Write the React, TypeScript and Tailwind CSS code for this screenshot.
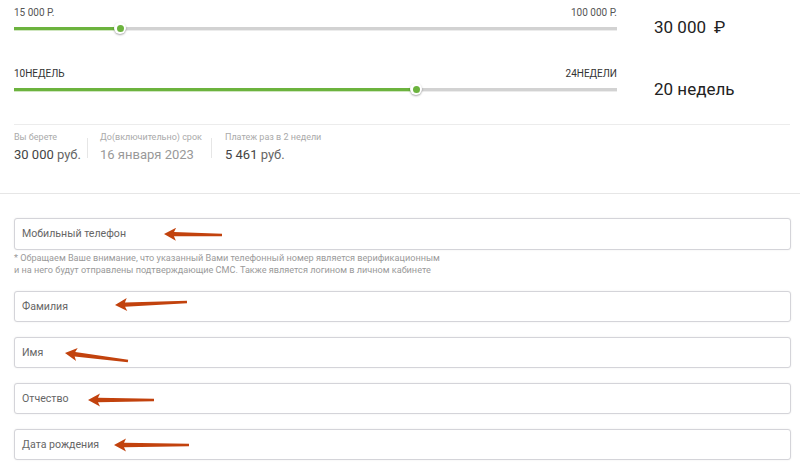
import React from "react";

type Pt = [number, number];

// annotation arrows drawn over the form
const ARROWS: { tip: Pt; tail: Pt }[] = [
  { tip: [164, 234], tail: [222, 235] },
  { tip: [115, 305], tail: [187, 302] },
  { tip: [65, 353], tail: [128, 361] },
  { tip: [88, 400], tail: [154, 400] },
  { tip: [114, 445], tail: [189, 445] },
];

function arrowPoints(tip: Pt, tail: Pt) {
  const dx = tail[0] - tip[0];
  const dy = tail[1] - tip[1];
  const len = Math.hypot(dx, dy);
  const d: Pt = [dx / len, dy / len];
  const n: Pt = [-d[1], d[0]];
  const at = (base: Pt, along: number, side: number): string =>
    `${base[0] + d[0] * along + n[0] * side},${base[1] + d[1] * along + n[1] * side}`;
  return [
    at(tip, 0, 0),
    at(tip, 12, 6.5),
    at(tip, 10, 2.2),
    at(tail, 0, 1.3),
    at(tail, 0, -1.3),
    at(tip, 10, -2.2),
    at(tip, 12, -6.5),
  ].join(" ");
}

function Slider({ fill }: { fill: number }) {
  return (
    <div className="relative h-[12px] w-full flex items-center">
      <div className="h-[3px] w-full bg-[#d2d2d2] shadow-[0_1px_0_#ececec]" />
      <div
        className="absolute left-0 h-[3px] bg-[#6cb33e] shadow-[0_1px_0_#cfe6bf]"
        style={{ width: fill }}
      />
      <div
        className="absolute w-[12px] h-[12px] rounded-full bg-white shadow-[0_1px_2px_rgba(0,0,0,0.35)] flex items-center justify-center"
        style={{ left: fill - 6 }}
      >
        <div className="w-[7px] h-[7px] rounded-full bg-[#6cb33e]" />
      </div>
    </div>
  );
}

function Field({ label }: { label: string }) {
  return (
    <div className="h-[31px] w-[777px] ml-[14px] rounded-[3px] border border-[#d4d4d9] bg-white shadow-[0_0_2px_rgba(0,0,0,0.08)] flex items-center pl-[7px] text-[10.6px] text-[#666]">
      {label}
    </div>
  );
}

function Info({ label, children }: { label: string; children: React.ReactNode }) {
  return (
    <div className="flex flex-col pt-[7px]">
      <span className="text-[9px] leading-[11px] text-[#aaa]">{label}</span>
      <span className="mt-[4px] text-[13px] leading-[16px] text-[#666]">{children}</span>
    </div>
  );
}

export default function App() {
  return (
    <div className="relative w-[800px] h-[467px] overflow-hidden bg-white font-['Roboto',sans-serif]">
      {/* sliders */}
      <div className="flex h-[40px] pl-[14px]">
        <div className="w-[603px] pt-[7px]">
          <div className="flex justify-between text-[10px] leading-[12px] text-[#555]">
            <span>15 000 Р.</span>
            <span>100 000 Р.</span>
          </div>
          <div className="mt-[3px]">
            <Slider fill={106} />
          </div>
        </div>
        <div className="pl-[37px] pt-[17px] text-[17px] leading-[20px] text-[#222]">
          30 000<span className="ml-[8px]">₽</span>
        </div>
      </div>
      <div className="flex h-[84px] pl-[14px]">
        <div className="w-[603px] pt-[28px]">
          <div className="flex justify-between text-[10px] leading-[12px] text-[#333]">
            <span>10НЕДЕЛЬ</span>
            <span>24НЕДЕЛИ</span>
          </div>
          <div className="mt-[3px]">
            <Slider fill={402} />
          </div>
        </div>
        <div className="pl-[37px] pt-[39px] text-[17px] leading-[20px] text-[#222]">
          20 недель
        </div>
      </div>
      <div className="ml-[14px] mr-[10px] border-t border-[#ececec]" />

      {/* summary */}
      <div className="flex h-[68px] pl-[14px]">
        <div className="w-[73px]">
          <Info label="Вы берете">
            <span className="text-[#444]">30 000</span> руб.
          </Info>
        </div>
        <div className="w-px h-[20px] mt-[13px] bg-[#e6e6e6]" />
        <div className="w-[123px] pl-[12px]">
          <Info label="До(включительно) срок">
            <span className="text-[#999]">16 января 2023</span>
          </Info>
        </div>
        <div className="w-px h-[20px] mt-[13px] bg-[#e6e6e6]" />
        <div className="pl-[13px]">
          <Info label="Платеж раз в 2 недели">
            <span className="text-[#444]">5 461</span> руб.
          </Info>
        </div>
      </div>
      <div className="border-t border-[#e6e6e6]" />

      {/* form */}
      <div className="flex flex-col pt-[24px]">
        <div className="h-[32px] w-[777px] ml-[14px] rounded-[3px] border border-[#d4d4d9] bg-white shadow-[0_0_2px_rgba(0,0,0,0.08)] flex items-center pl-[7px] text-[10.6px] text-[#666]">
          Мобильный телефон
        </div>
        <p className="ml-[14px] mt-[3px] text-[9.15px] leading-[11.5px] text-[#9a9a9a]">
          * Обращаем Ваше внимание, что указанный Вами телефонный номер является верификационным
          <br />
          и на него будут отправлены подтверждающие СМС. Также является логином в личном кабинете
        </p>
        <div className="mt-[15px] flex flex-col gap-[15px]">
          <Field label="Фамилия" />
          <Field label="Имя" />
          <Field label="Отчество" />
          <Field label="Дата рождения" />
        </div>
      </div>

      {/* red annotation arrows */}
      <svg className="absolute inset-0 pointer-events-none" width={800} height={467}>
        {ARROWS.map((a, i) => (
          <polygon key={i} points={arrowPoints(a.tip, a.tail)} fill="#c2420d" />
        ))}
      </svg>
    </div>
  );
}
